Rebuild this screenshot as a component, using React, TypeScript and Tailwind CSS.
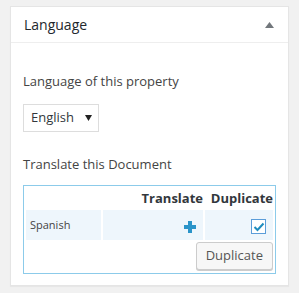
import React from "react";

export default function App() {
  return (
    <div className="w-[299px] h-[293px] bg-[#f1f1f1] pt-[6px] px-[10px]" style={{ fontFamily: '"Open Sans", "Noto Sans", sans-serif' }}>
      <div className="bg-white border border-[#e5e5e5] shadow-[0_1px_1px_rgba(0,0,0,0.04)]">
        <div className="h-[36px] border-b border-[#eeeeee] flex items-center justify-between pl-[13px] pr-[14px]">
          <span className="text-[14px] text-[#23282d] leading-none">Language</span>
          <svg width="9" height="6" viewBox="0 0 9 6"><path d="M4.5 0 L9 6 L0 6 Z" fill="#72777c" /></svg>
        </div>
        <div className="px-[12px] pt-[28px] pb-[11px]">
          <div className="text-[13px] leading-[20px] text-[#444]">Language of this property</div>
          <div className="mt-[13px] w-[76px] h-[28px] border border-[#dddddd] flex items-center justify-between pl-[7px] pr-[6px]">
            <span className="text-[13px] text-[#32373c]">English</span>
            <svg width="7" height="6" viewBox="0 0 7 6"><path d="M0 0 L7 0 L3.5 6 Z" fill="#222" /></svg>
          </div>
          <div className="mt-[22px] text-[13px] leading-[20px] text-[#444]">Translate this Document</div>
          <div className="mt-[11px] border border-[#8ccbea]">
            <table className="w-full table-fixed border-separate border-spacing-[2px]">
              <colgroup>
                <col className="w-[75px]" />
                <col />
                <col className="w-[68px]" />
              </colgroup>
              <thead>
                <tr className="h-[20px]">
                  <th className="p-0"></th>
                  <th className="p-0 text-right text-[13px] font-bold text-[#32373c] leading-none">Translate</th>
                  <th className="p-0 text-right text-[13px] font-bold text-[#32373c] leading-none">Duplicate</th>
                </tr>
              </thead>
              <tbody>
                <tr className="h-[30px]">
                  <td className="p-0 bg-[#eef6fc] text-[11px] text-[#444] pl-[4px]">Spanish</td>
                  <td className="p-0 bg-[#eef6fc] text-right pr-[7px]">
                    <svg className="inline-block align-middle" width="12" height="12" viewBox="0 0 12 12"><path d="M4 0 H8 V4 H12 V8 H8 V12 H4 V8 H0 V4 H4 Z" fill="#2a94c9" /></svg>
                  </td>
                  <td className="p-0 bg-[#eef6fc] text-right pr-[7px]">
                    <span className="inline-flex w-[15px] h-[15px] border border-[#5b9dd9] bg-white items-center justify-center align-middle">
                      <svg width="12" height="10" viewBox="0 0 12 10"><path d="M1.5 5 L4.5 8 L10.5 1.5" stroke="#1e8cbe" strokeWidth="2" fill="none" /></svg>
                    </span>
                  </td>
                </tr>
                <tr>
                  <td colSpan={3} className="p-0 text-right pb-[1px]">
                    <button className="h-[28px] px-[9px] bg-[#f7f7f7] border border-[#cccccc] rounded-[3px] shadow-[0_1px_0_#cccccc] text-[13px] text-[#555]">Duplicate</button>
                  </td>
                </tr>
              </tbody>
            </table>
          </div>
        </div>
      </div>
    </div>
  );
}
